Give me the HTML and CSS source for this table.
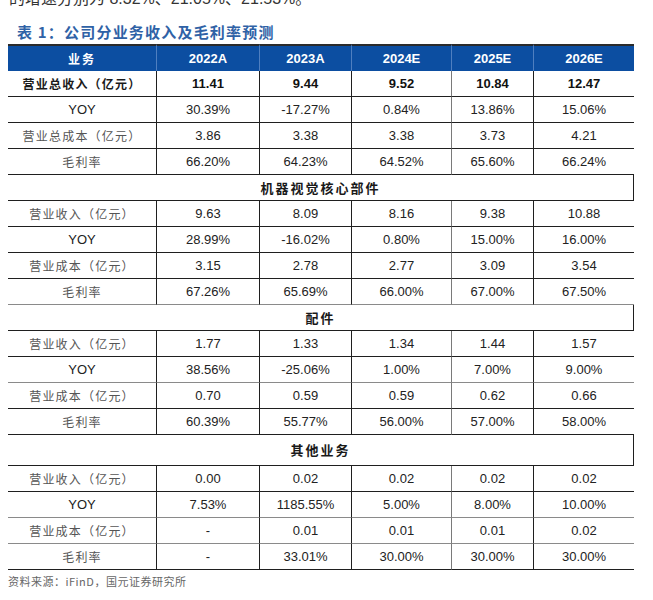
FILE: index.html
```html
<!DOCTYPE html>
<html lang="zh-CN">
<head>
<meta charset="utf-8">
<title>表 1：公司分业务收入及毛利率预测</title>
<link rel="stylesheet" href="styles.css">
</head>
<body>
<div class="page">
  <p class="lead">的增速分别为 8.32%、21.05%、21.53%。</p>
  <h2 class="title">表 1：公司分业务收入及毛利率预测</h2>
  <table class="fc">
    <colgroup>
      <col class="c0"><col class="c1"><col class="c2"><col class="c3"><col class="c4"><col class="c5">
    </colgroup>
    <thead>
      <tr><th class="cn">业务</th><th>2022A</th><th>2023A</th><th>2024E</th><th>2025E</th><th>2026E</th></tr>
    </thead>
    <tbody>
      <tr class="bold"><td class="lbl">营业总收入（亿元）</td><td>11.41</td><td>9.44</td><td>9.52</td><td>10.84</td><td>12.47</td></tr>
      <tr><td class="en">YOY</td><td>30.39%</td><td>-17.27%</td><td>0.84%</td><td>13.86%</td><td>15.06%</td></tr>
      <tr><td class="lbl">营业总成本（亿元）</td><td>3.86</td><td>3.38</td><td>3.38</td><td>3.73</td><td>4.21</td></tr>
      <tr><td class="lbl">毛利率</td><td>66.20%</td><td>64.23%</td><td>64.52%</td><td>65.60%</td><td>66.24%</td></tr>
      <tr class="sec"><td colspan="6">机器视觉核心部件</td></tr>
      <tr><td class="lbl">营业收入（亿元）</td><td>9.63</td><td>8.09</td><td>8.16</td><td>9.38</td><td>10.88</td></tr>
      <tr><td class="en">YOY</td><td>28.99%</td><td>-16.02%</td><td>0.80%</td><td>15.00%</td><td>16.00%</td></tr>
      <tr><td class="lbl">营业成本（亿元）</td><td>3.15</td><td>2.78</td><td>2.77</td><td>3.09</td><td>3.54</td></tr>
      <tr class="grayline"><td class="lbl">毛利率</td><td>67.26%</td><td>65.69%</td><td>66.00%</td><td>67.00%</td><td>67.50%</td></tr>
      <tr class="sec"><td colspan="6">配件</td></tr>
      <tr><td class="lbl">营业收入（亿元）</td><td>1.77</td><td>1.33</td><td>1.34</td><td>1.44</td><td>1.57</td></tr>
      <tr class="grayline"><td class="en">YOY</td><td>38.56%</td><td>-25.06%</td><td>1.00%</td><td>7.00%</td><td>9.00%</td></tr>
      <tr><td class="lbl">营业成本（亿元）</td><td>0.70</td><td>0.59</td><td>0.59</td><td>0.62</td><td>0.66</td></tr>
      <tr><td class="lbl">毛利率</td><td>60.39%</td><td>55.77%</td><td>56.00%</td><td>57.00%</td><td>58.00%</td></tr>
      <tr class="sec tall"><td colspan="6">其他业务</td></tr>
      <tr><td class="lbl">营业收入（亿元）</td><td>0.00</td><td>0.02</td><td>0.02</td><td>0.02</td><td>0.02</td></tr>
      <tr class="grayline"><td class="en">YOY</td><td>7.53%</td><td>1185.55%</td><td>5.00%</td><td>8.00%</td><td>10.00%</td></tr>
      <tr class="grayline"><td class="lbl">营业成本（亿元）</td><td>-</td><td>0.01</td><td>0.01</td><td>0.01</td><td>0.02</td></tr>
      <tr><td class="lbl">毛利率</td><td>-</td><td>33.01%</td><td>30.00%</td><td>30.00%</td><td>30.00%</td></tr>
    </tbody>
  </table>
  <p class="source">资料来源：iFinD，国元证券研究所</p>
</div>
</body>
</html>
```

FILE: styles.css
```css
html, body {
  margin: 0;
  padding: 0;
  background: #ffffff;
}

.page {
  padding-left: 8px;
  width: 626px;
  overflow: hidden;
  height: 600px;
  font-family: "Liberation Sans", "Noto Sans CJK SC", sans-serif;
  color: #1a1a1a;
}

.lead {
  margin: -11px 0 0 1px;
  height: 20px;
  font-size: 16px;
  line-height: 20px;
  color: #333333;
  white-space: nowrap;
}

.title {
  margin: 13px 0 0 9px;
  height: 20px;
  font-size: 15px;
  line-height: 20px;
  font-weight: bold;
  color: #2f62a6;
  letter-spacing: 1.2px;
  font-family: "Noto Sans CJK SC", sans-serif;
}

.fc {
  margin-top: 2px;
  width: 626px;
  table-layout: fixed;
  border-collapse: separate;
  border-spacing: 0;
  font-size: 13px;
}

.c0 { width: 149px; }
.c1 { width: 103px; }
.c2 { width: 92px; }
.c3 { width: 100px; }
.c4 { width: 82px; }
.c5 { width: 100px; }

.fc th {
  height: 25px;
  padding: 0;
  background: #0c4ea1;
  color: #ffffff;
  font-weight: bold;
  border-top: 2px solid #2b2b2b;
  border-right: 1px solid #4f7fc0;
  text-align: center;
  vertical-align: middle;
  line-height: 16px;
}

.fc th:last-child { border-right: none; }

.fc th.cn {
  font-family: "Noto Sans CJK SC", sans-serif;
  font-size: 12px;
  letter-spacing: 2px;
}

.fc td {
  height: 25px;
  padding: 0;
  text-align: center;
  vertical-align: middle;
  border-bottom: 1px solid #1f1f1f;
  border-right: 1px solid #1f1f1f;
  color: #222222;
  line-height: 16px;
  white-space: nowrap;
}

.fc td:last-child { border-right: none; }

.fc td:nth-child(4) { border-right-color: #7a7a7a; }

.fc td.lbl {
  font-family: "Noto Sans CJK SC", sans-serif;
  font-size: 12px;
  letter-spacing: 1.2px;
  color: #555555;
}

.fc td.en {
  font-size: 13px;
}

.fc tr.bold td {
  font-weight: bold;
  color: #111111;
}

.fc tr.bold td.lbl {
  color: #1a1a1a;
}

.fc tr.grayline td {
  border-bottom-color: #8a8a8a;
}

.fc tr.sec td {
  font-family: "Noto Sans CJK SC", sans-serif;
  font-weight: bold;
  font-size: 13px;
  letter-spacing: 2px;
  color: #1a1a1a;
  border-right: 1px solid #1f1f1f;
}

.fc tr.tall td {
  height: 30px;
}

.source {
  margin: 4px 0 0 0;
  font-family: "Noto Sans CJK SC", sans-serif;
  font-size: 11px;
  line-height: 14px;
  color: #666666;
  letter-spacing: 0.5px;
}
```
